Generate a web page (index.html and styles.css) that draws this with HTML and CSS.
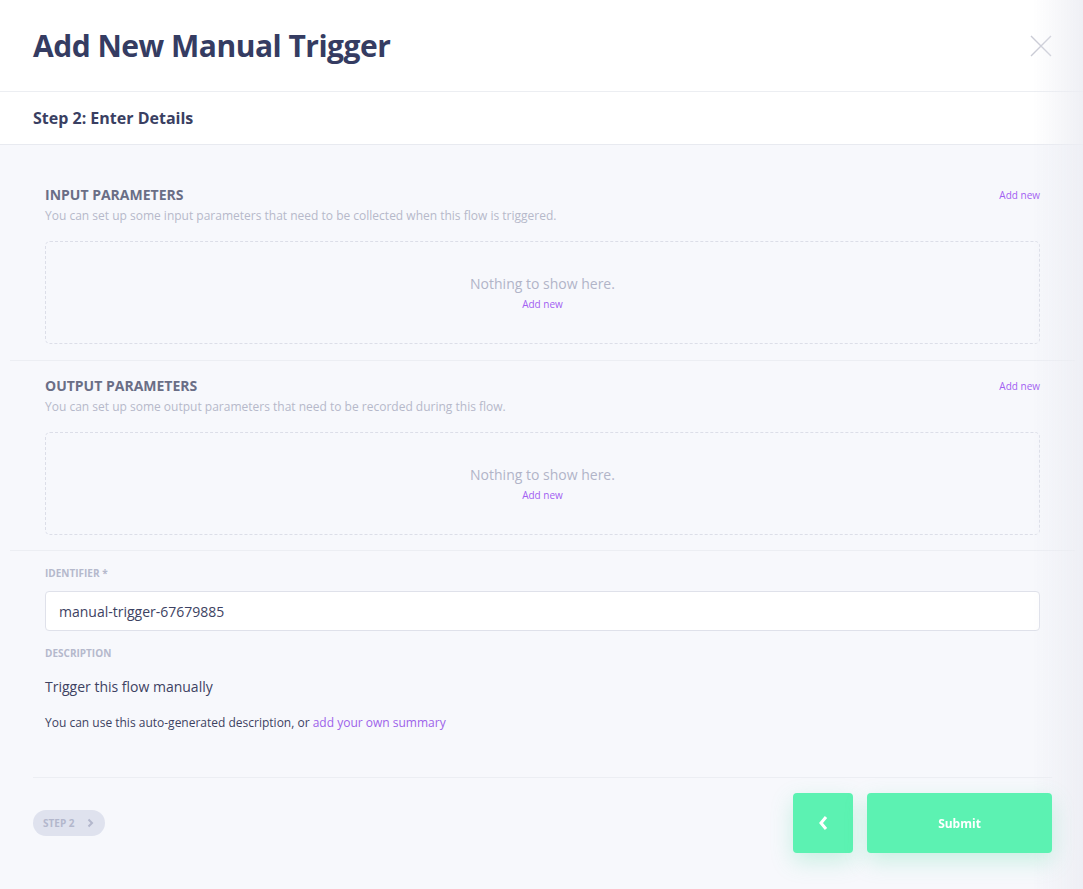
FILE: index.html
```html
<!DOCTYPE html>
<html>
<head>
<meta charset="utf-8">
<link rel="stylesheet" href="styles.css">
</head>
<body>
<div class="panel">
  <header class="header">
    <h1 class="title">Add New Manual Trigger</h1>
    <button class="close" aria-label="Close">
      <svg width="22" height="22" viewBox="0 0 22 22"><path d="M1 1L21 21M21 1L1 21" stroke="#c9cbd5" stroke-width="1.4" fill="none"/></svg>
    </button>
  </header>
  <div class="subheader">Step 2: Enter Details</div>
  <main class="body">
    <section class="section first">
      <div class="sec-head">
        <div>
          <h2 class="sec-title">INPUT PARAMETERS</h2>
          <p class="sec-sub">You can set up some input parameters that need to be collected when this flow is triggered.</p>
        </div>
        <a class="add-link">Add new</a>
      </div>
      <div class="empty">
        <div class="empty-text">Nothing to show here.</div>
        <a class="add-link">Add new</a>
      </div>
    </section>
    <section class="section second">
      <div class="sec-head">
        <div>
          <h2 class="sec-title">OUTPUT PARAMETERS</h2>
          <p class="sec-sub">You can set up some output parameters that need to be recorded during this flow.</p>
        </div>
        <a class="add-link">Add new</a>
      </div>
      <div class="empty">
        <div class="empty-text">Nothing to show here.</div>
        <a class="add-link">Add new</a>
      </div>
    </section>
    <section class="section fields">
      <label class="field-label">IDENTIFIER *</label>
      <div class="input">manual-trigger-67679885</div>
      <label class="field-label desc-label">DESCRIPTION</label>
      <div class="desc">Trigger this flow manually</div>
      <p class="hint">You can use this auto-generated description, or <a class="link">add your own summary</a></p>
    </section>
  </main>
  <footer class="footer">
    <div class="pill">STEP 2
      <svg width="7" height="10" viewBox="0 0 7 10"><path d="M1.5 1.5L5 5L1.5 8.5" stroke="#b3b7cc" stroke-width="2" fill="none"/></svg>
    </div>
    <div class="actions">
      <button class="btn back" aria-label="Back">
        <svg width="10" height="16" viewBox="0 0 10 16"><path d="M8 2L3 8L8 14" stroke="#fff" stroke-width="3" fill="none"/></svg>
      </button>
      <button class="btn submit">Submit</button>
    </div>
  </footer>
</div>
<div class="edge-shade"></div>
</body>
</html>
```
FILE: styles.css
```css
* { box-sizing: border-box; }
html, body { margin: 0; padding: 0; }
body {
  font-family: "Open Sans", "Noto Sans", sans-serif;
  background: #f7f8fc;
  width: 1083px;
  height: 889px;
  overflow: hidden;
  color: #3a3f62;
}
.panel { width: 1083px; height: 889px; background: #f7f8fc; }
.header {
  height: 92px;
  background: #fff;
  border-bottom: 1px solid #eceef2;
  display: flex;
  align-items: center;
  justify-content: space-between;
  padding: 0 31px 0 33px;
}
.title {
  margin: 0;
  font-size: 30px;
  font-weight: 700;
  letter-spacing: -0.5px;
  color: #353c62;
  line-height: 40px;
}
.close {
  border: 0;
  background: none;
  padding: 0;
  width: 22px;
  height: 22px;
  display: block;
}
.close svg { display: block; }
.subheader {
  height: 53px;
  background: #fff;
  border-bottom: 1px solid #e8eaf0;
  padding: 0 33px;
  display: flex;
  align-items: center;
  font-size: 16px;
  font-weight: 700;
  color: #3a3f62;
}
.body { padding: 0 8px 0 10px; }
.section {
  padding: 15px 35px 16px;
  border-bottom: 1px solid #eceef3;
}
.section.first { padding-top: 40px; }
.section.second { padding-bottom: 15px; }
.sec-head {
  display: flex;
  justify-content: space-between;
  align-items: flex-start;
}
.sec-title {
  margin: 0;
  font-size: 14px;
  line-height: 20px;
  font-weight: 700;
  color: #6a6e86;
}
.sec-sub {
  margin: 3px 0 0;
  font-size: 12px;
  line-height: 16px;
  color: #b6b9ca;
}
.add-link {
  font-size: 10px;
  line-height: 14px;
  color: #a25ff2;
  cursor: pointer;
}
.sec-head .add-link { margin-top: 3px; }
.empty {
  margin-top: 17px;
  height: 103px;
  border: 1px dashed #dcdee8;
  border-radius: 5px;
  display: flex;
  flex-direction: column;
  align-items: center;
  justify-content: center;
  gap: 3px;
}
.empty-text {
  font-size: 14px;
  line-height: 20px;
  color: #b1b4c8;
}
.fields { border-bottom: 0; padding-top: 15px; padding-bottom: 0; }
.field-label {
  display: block;
  font-size: 10px;
  line-height: 14px;
  font-weight: 700;
  color: #b5b9cc;
}
.input {
  margin-top: 11px;
  height: 40px;
  background: #fff;
  border: 1px solid #dfe1ea;
  border-radius: 4px;
  padding: 0 13px;
  display: flex;
  align-items: center;
  font-size: 14px;
  color: #3d4262;
}
.desc-label { margin-top: 15px; }
.desc {
  margin-top: 17px;
  font-size: 14px;
  line-height: 20px;
  color: #3d4262;
}
.hint {
  margin: 18px 0 0;
  font-size: 12px;
  line-height: 16px;
  color: #3d4262;
}
.link { color: #9d62ea; cursor: pointer; }
.footer {
  position: relative;
  z-index: 2;
  margin: 46px 31px 0 33px;
  border-top: 1px solid #eceef3;
  padding-top: 15px;
  display: flex;
  justify-content: space-between;
  align-items: center;
}
.pill {
  height: 26px;
  width: 72px;
  border-radius: 13px;
  background: #dfe2ee;
  color: #b3b7cc;
  font-size: 10px;
  font-weight: 700;
  display: flex;
  align-items: center;
  padding: 0 0 0 10px;
  gap: 12px;
}
.actions { display: flex; gap: 14px; }
.btn {
  border: 0;
  height: 60px;
  border-radius: 4px;
  background: #5cf2b2;
  color: #fff;
  font-family: "Open Sans", sans-serif;
  font-weight: 700;
  font-size: 12px;
  display: flex;
  align-items: center;
  justify-content: center;
  box-shadow: 0 8px 22px rgba(80, 220, 160, 0.28);
}
.back { width: 60px; }
.submit { width: 185px; }
.edge-shade {
  position: fixed;
  z-index: 1;
  top: 0;
  right: 0;
  bottom: 0;
  width: 50px;
  background: linear-gradient(to right, rgba(238, 239, 245, 0), rgba(236, 237, 243, 0.85));
  pointer-events: none;
}
```
